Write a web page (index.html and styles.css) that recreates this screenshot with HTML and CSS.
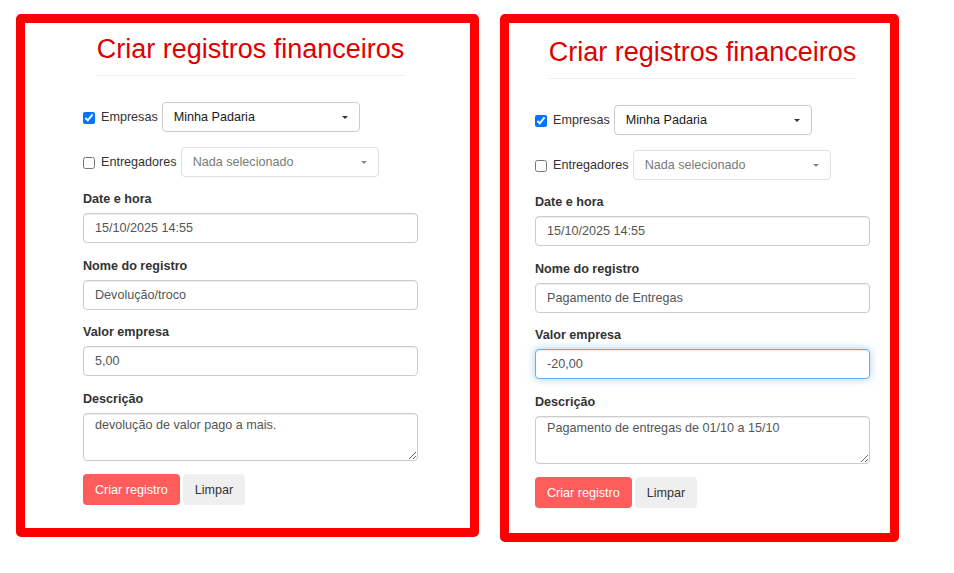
FILE: index.html
```html
<!DOCTYPE html>
<html lang="pt-BR">
<head>
<meta charset="utf-8">
<title>Criar registros financeiros</title>
<link rel="stylesheet" href="styles.css">
</head>
<body>
<div class="page">
  <section class="panel panel-a">
    <h2 class="title">Criar registros financeiros</h2>
    <div class="check-row">
      <label class="check"><input type="checkbox" checked> Empresas</label>
      <div class="picker"><span>Minha Padaria</span><span class="caret"></span></div>
    </div>
    <div class="check-row last">
      <label class="check"><input type="checkbox"> Entregadores</label>
      <div class="picker muted"><span>Nada selecionado</span><span class="caret"></span></div>
    </div>
    <div class="field">
      <label class="lbl">Date e hora</label>
      <input class="control" type="text" value="15/10/2025 14:55">
    </div>
    <div class="field">
      <label class="lbl">Nome do registro</label>
      <input class="control" type="text" value="Devolução/troco">
    </div>
    <div class="field">
      <label class="lbl">Valor empresa</label>
      <input class="control" type="text" value="5,00">
    </div>
    <div class="field">
      <label class="lbl">Descrição</label>
      <textarea class="control area" rows="2">devolução de valor pago a mais.</textarea>
    </div>
    <div class="actions">
      <button class="btn btn-primary" type="button">Criar registro</button>
      <button class="btn btn-light" type="button">Limpar</button>
    </div>
  </section>

  <section class="panel panel-b">
    <h2 class="title">Criar registros financeiros</h2>
    <div class="check-row">
      <label class="check"><input type="checkbox" checked> Empresas</label>
      <div class="picker"><span>Minha Padaria</span><span class="caret"></span></div>
    </div>
    <div class="check-row last">
      <label class="check"><input type="checkbox"> Entregadores</label>
      <div class="picker muted"><span>Nada selecionado</span><span class="caret"></span></div>
    </div>
    <div class="field">
      <label class="lbl">Date e hora</label>
      <input class="control" type="text" value="15/10/2025 14:55">
    </div>
    <div class="field">
      <label class="lbl">Nome do registro</label>
      <input class="control" type="text" value="Pagamento de Entregas">
    </div>
    <div class="field">
      <label class="lbl">Valor empresa</label>
      <input class="control focus" type="text" value="-20,00">
    </div>
    <div class="field">
      <label class="lbl">Descrição</label>
      <textarea class="control area" rows="2">Pagamento de entregas de 01/10 a 15/10</textarea>
    </div>
    <div class="actions">
      <button class="btn btn-primary" type="button">Criar registro</button>
      <button class="btn btn-light" type="button">Limpar</button>
    </div>
  </section>
</div>
</body>
</html>
```
FILE: styles.css
```css
* { box-sizing: border-box; }

html, body {
  margin: 0;
  background: #fff;
}

body {
  font-family: "Liberation Sans", Arial, sans-serif;
  font-size: 12.6px;
  line-height: 18px;
  color: #333;
}

.page {
  display: flex;
  align-items: flex-start;
  gap: 21px;
  padding: 14px 0 0 16px;
}

.panel {
  border: 9px solid #ff0000;
  border-radius: 5px;
  background: #fff;
}

.panel-a {
  width: 463px;
  padding: 12px 52px 23px 58px;
}

.panel-b {
  width: 399px;
  padding: 15px 20px 25px 26px;
}

.title {
  width: fit-content;
  margin: 0 auto 26.3px;
  padding-bottom: 10px;
  border-bottom: 1px solid #eee;
  font-size: 27px;
  line-height: 29.7px;
  font-weight: 400;
  color: #dd0000;
}

.check-row {
  display: flex;
  align-items: center;
  margin-bottom: 15px;
}

.check-row.last {
  margin-bottom: 13px;
}

.check {
  display: flex;
  align-items: center;
  color: #333;
}

.check input {
  width: 12px;
  height: 12px;
  margin: 2px 6px 0 0;
}

.picker {
  width: 198px;
  height: 30px;
  margin-left: 4px;
  display: flex;
  align-items: center;
  justify-content: space-between;
  padding: 0 11px;
  border: 1px solid #ccc;
  border-radius: 4px;
  color: #1a1a1a;
  background: #fff;
}

.picker.muted {
  border-color: #e0e0e0;
  color: #7a7a7a;
}

.caret {
  width: 0;
  height: 0;
  border-top: 3.5px solid #333;
  border-left: 3px solid transparent;
  border-right: 3px solid transparent;
  margin-top: 1px;
}

.picker.muted .caret {
  border-top-color: #888;
}

.field {
  margin-bottom: 13.5px;
}

.lbl {
  display: block;
  font-weight: 700;
  line-height: 18px;
  margin-bottom: 5px;
  color: #333;
}

.control {
  display: block;
  width: 100%;
  height: 30px;
  padding: 0 11px;
  border: 1px solid #ccc;
  border-radius: 4px;
  font-family: inherit;
  font-size: 12.6px;
  color: #555;
  background: #fff;
  box-shadow: inset 0 1px 1px rgba(0, 0, 0, 0.075);
  outline: none;
}

.control.area {
  height: 48px;
  padding: 2px 11px;
  line-height: 18px;
  resize: vertical;
}

.control.focus {
  border-color: #66afe9;
  box-shadow: inset 0 1px 1px rgba(0, 0, 0, 0.075), 0 0 8px rgba(102, 175, 233, 0.6);
}

.actions {
  display: flex;
  gap: 3px;
}

.btn {
  height: 31px;
  padding: 0 12px;
  border: 0;
  border-radius: 4px;
  font-family: inherit;
  font-size: 12.6px;
}

.btn-primary {
  background: #ff5c5c;
  color: #fff;
}

.btn-light {
  background: #efefef;
  color: #333;
}
```
